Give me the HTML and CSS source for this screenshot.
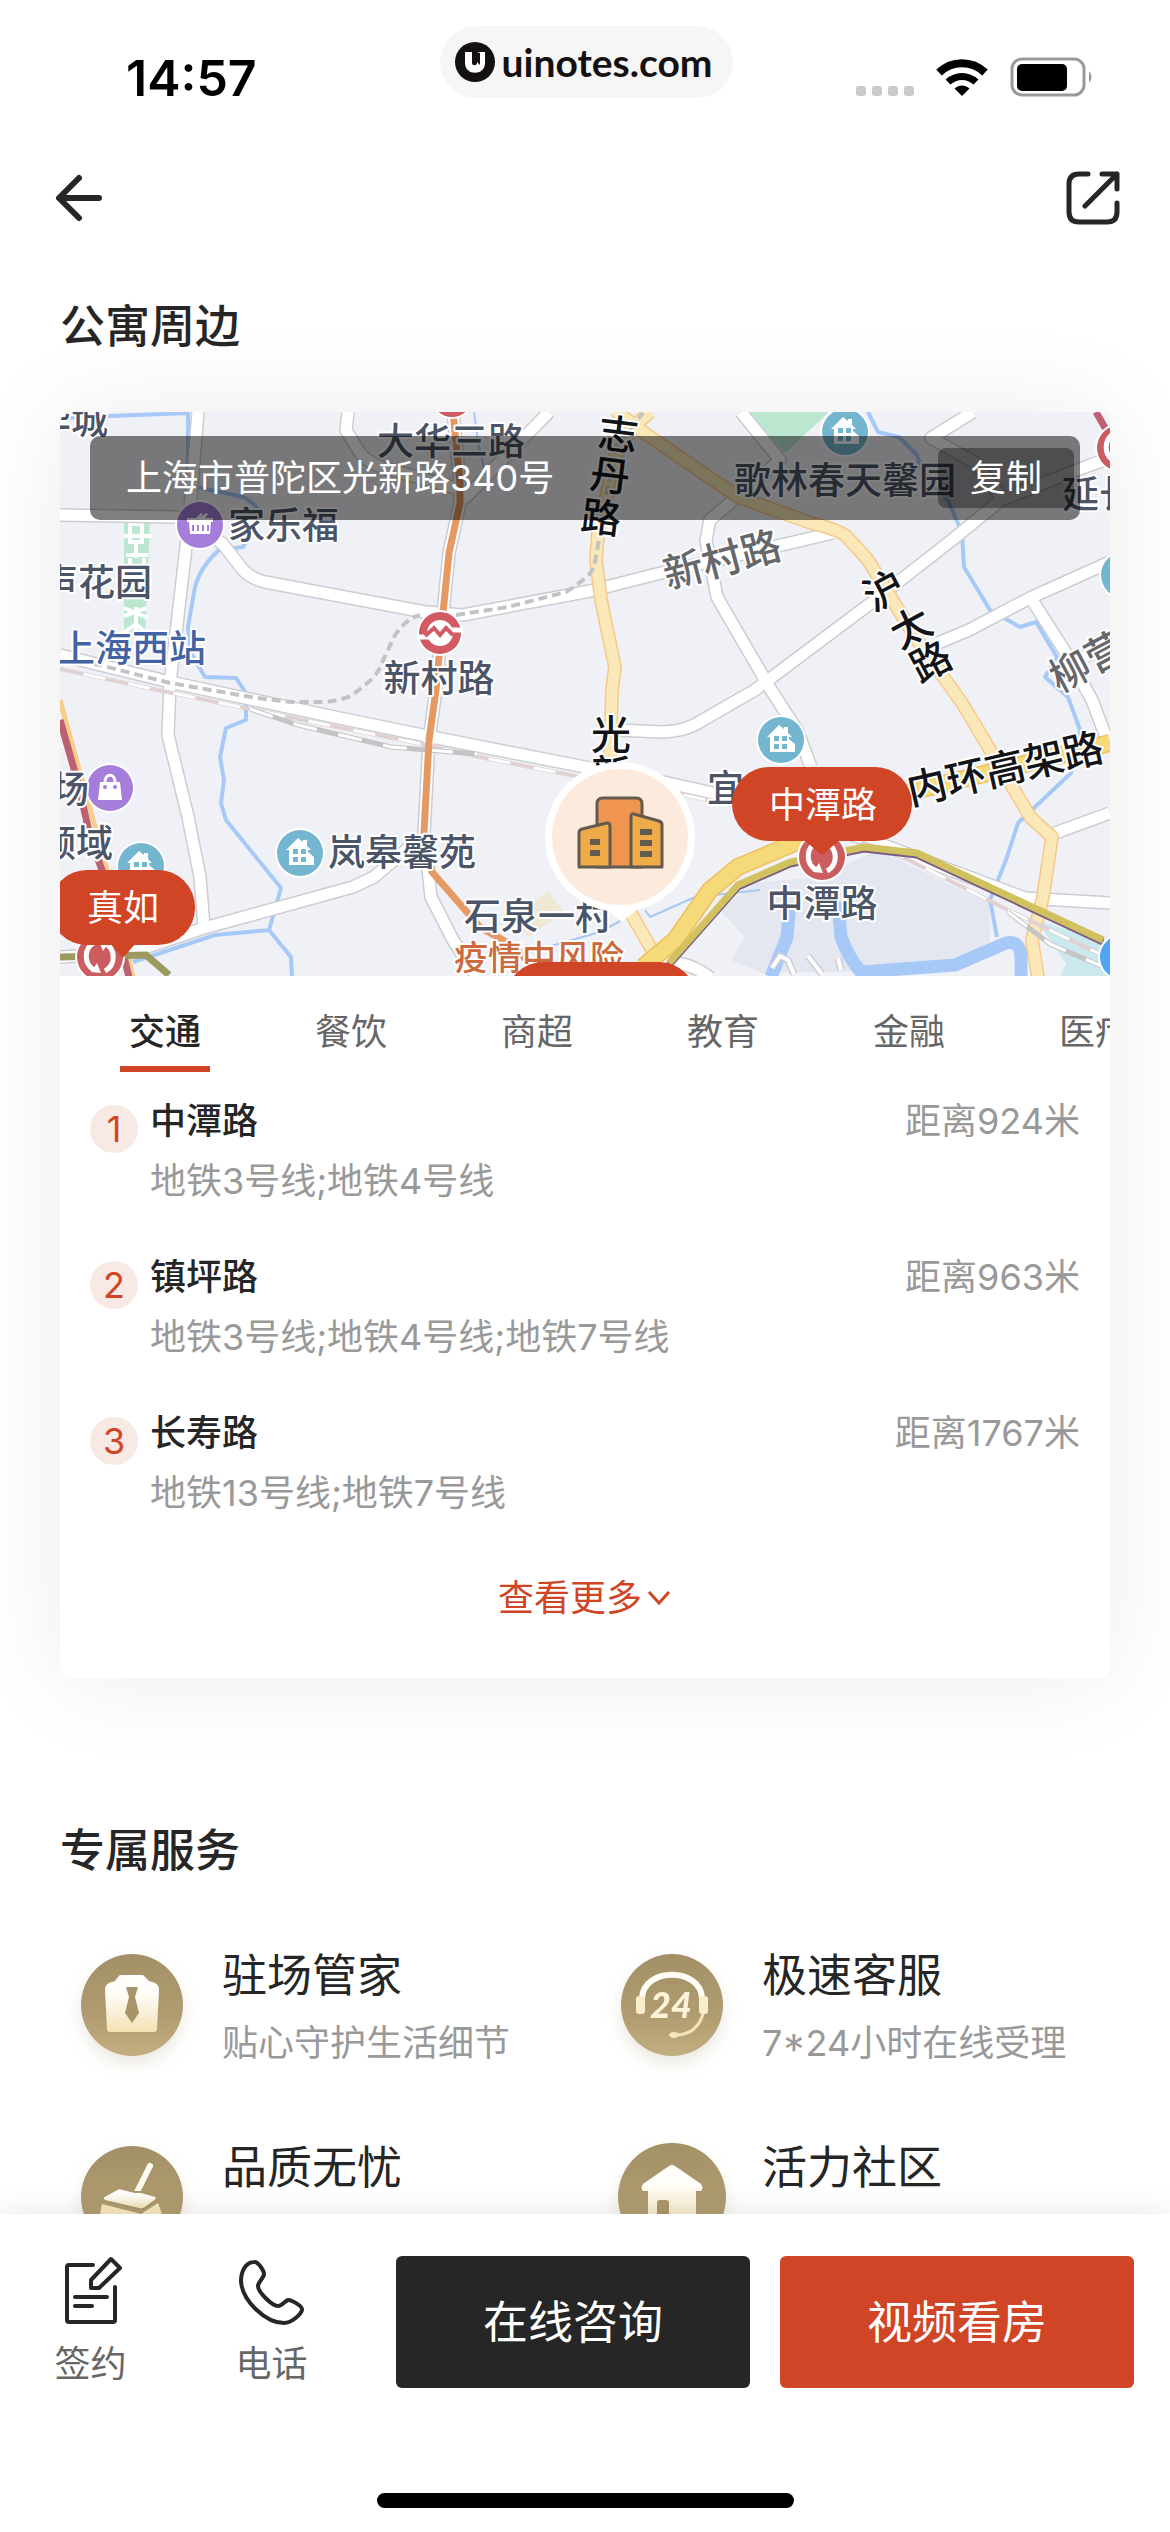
FILE: index.html
```html
<!DOCTYPE html>
<html lang="zh-CN">
<head>
    <meta charset="UTF-8">
    <meta name="viewport" content="width=device-width, initial-scale=1">
    <title>公寓周边</title>
    <link rel="stylesheet" href="styles.css">
</head>
<body>
    <header class="status-bar">
        <span class="time">14:57</span>
        <span class="island">
            <svg width="40" height="40" viewBox="0 0 40 40" aria-hidden="true">
                <circle cx="20" cy="20" r="20" fill="#151112"/>
                <path d="M10 10h7v11c0 3 5 3 5 0V10h8v11c0 13-20 13-20 0z" fill="#fff"/>
                <path d="M17 10h5l3 1v12l-3-3-3 3z" fill="#151112"/>
            </svg>
            uinotes.com
        </span>
        <span class="status-icons">
            <svg width="58" height="40" viewBox="0 0 58 40" fill="#cbcbcb" aria-hidden="true">
                <rect x="0" y="29" width="10" height="10" rx="3"/>
                <rect x="16" y="29" width="10" height="10" rx="3"/>
                <rect x="32" y="29" width="10" height="10" rx="3"/>
                <rect x="48" y="29" width="10" height="10" rx="3"/>
            </svg>
            <svg width="52" height="40" viewBox="0 0 52 40" aria-hidden="true">
                <path d="M3 15.500C16 3 36 3 49 15.500" fill="none" stroke="#000" stroke-width="8"/>
                <path d="M12 25C20 17.500 32 17.500 40 25" fill="none" stroke="#000" stroke-width="7"/>
                <path d="M18.500 31.500C23 27.500 29 27.500 33.500 31.500L26 39z"/>
            </svg>
            <svg width="84" height="40" viewBox="0 0 84 40" aria-hidden="true">
                <rect x="2" y="2" width="72" height="36" rx="10" fill="none" stroke="#999" stroke-width="3"/>
                <rect x="7" y="7" width="50" height="27" rx="5"/>
                <path d="M79 14q5 6 0 12z" fill="#999"/>
            </svg>
        </span>
    </header>

    <nav class="nav-bar">
        <button class="icon-button" aria-label="返回">
            <svg width="52" height="54" viewBox="0 0 52 54" aria-hidden="true">
                <path d="M25 7L5 27l20 20M6 27h39"/>
            </svg>
        </button>
        <button class="icon-button" aria-label="分享">
            <svg width="54" height="54" viewBox="0 0 54 54" aria-hidden="true">
                <path d="M22 3H13Q3 3 3 13V41Q3 51 13 51H41Q51 51 51 41V32M36 3H51V18M51 3L19 35"/>
            </svg>
        </button>
    </nav>

    <main class="content">
        <h1 class="section-title">公寓周边</h1>

        <section class="card">
            <div class="map">
                <svg class="map-canvas" viewBox="0 0 1050 564" preserveAspectRatio="xMidYMid slice">
                    <defs>
                        <g id="home">
                            <circle r="25" fill="#fff"/>
                            <circle r="23" fill="#74b6d0"/>
                            <path d="M-14-3L-2-15 3-11v-2h4v6l4 4H8v2l6 5v8h-25V-3z" fill="#fff"/>
                            <path d="M-7-4h5v5h-5zM1-4h5v5H1zM-7 4h5v5h-5zM1 4h5v5H1z" fill="#74b6d0"/>
                        </g>
                        <g id="metro">
                            <circle r="25" fill="#fff"/>
                            <circle r="23" fill="#cb5c5f"/>
                            <path d="M-5-15A16 16 0 0 0-6 13M5-14A16 16 0 0 1 5 14" fill="none" stroke="#fff" stroke-width="5"/>
                            <path d="M-9 15L1 16-3 6zM9-15L-1-16 3-6z" fill="#fff"/>
                        </g>
                        <g id="metroM">
                            <circle r="23" fill="#fff"/>
                            <circle r="17" fill="#fff" stroke="#d25a62" stroke-width="8"/>
                            <path d="M-23 4h16M7-3h16" stroke="#fff" stroke-width="5"/>
                            <path d="M-15 3L-6-5l6 7 6-7 7 7" fill="none" stroke="#d25a62" stroke-width="4"/>
                        </g>

                        <path id="r1" d="M138 0L131 85 126 135 116 221 110 271 108 323 128 405 140 465 144 515"/>
                        <path id="r2" d="M0 103L117 105 162 131 183 158Q192 167 205 170L365 200 403 203 530 179 601 161 773 121"/>
                        <path id="r3" d="M393 0L400 71V91L389 141 383 201 376 278 369 328 364 421 371 485 393 528 417 565"/>
                        <path id="r4" d="M0 545L69 541 144 516 293 475 314 465 358 428"/>
                        <path id="r5" d="M288 0L286 18 300 41Q308 51 324 56L396 76M489 0L403 88"/>
                        <path id="r6" d="M0 243L110 270 265 303 372 325 530 356 608 371 671 385 818 431 965 486 1050 491"/>
                        <path id="r7" d="M681 0L720 48 650 108 646 128 657 185 711 278 737 318 751 355"/>
                        <path id="r8" d="M913 0L871 26 916 51 941 85M1050 46L1025 55 941 88 892 128 815 188 695 278 643 308Q625 320 601 320L558 318"/>
                        <path id="r9" d="M878 231L909 218 972 185 1050 150M972 188L1004 238 1032 288 1046 325M1004 255L1050 232M995 421L1050 401M592 553Q625 545 650 566"/>
                        <path id="y1" d="M590 0L573 15 555 45 538 121 536 148 541 188 555 255 552 278 550 351M569 498L592 538"/>
                        <path id="y2" d="M555-2L583 20 678 85 751 111Q780 118 787 125L808 148 857 228 902 291 971 406 992 425 983 485 972 528 978 565"/>
                        <path id="g1" d="M583 555L615 528 650 478 678 455 730 433 846 381 1050 331"/>
                    </defs>

                    <rect width="1050" height="564" fill="#f0f1f7"/>

                    <!-- blocks, parks, water -->
                    <path d="M695 471L758 465 818 438 929 491 930 531 871 558 702 561 671 548 685 525 660 498z" fill="#e4e7f0"/>
                    <path d="M976 508L1050 531V565H1000L1006 551z" fill="#cbe8ef"/>
                    <path d="M64 108H90L85 222H64zM688 0H769L725 41z" fill="#bbe6cf"/>
                    <path d="M488 479L504 500 468 525 455 505z" fill="#efe8d4"/>
                    <g fill="none" stroke="#a6c9f7" stroke-width="4" stroke-linejoin="round">
                        <path d="M0 6L128 1V71L141 76 183 85Q203 95 198 108L183 135 159 138Q140 155 135 175L128 215 131 241 145 265 176 266 186 281V308L166 316 160 345 164 368 161 391 166 408 221 476 209 518 231 545 232 565M209 518L155 523 73 550"/>
                        <path d="M808 0L818 20 839 25 857 43 864 65 888 88 902 121 904 155 930 198 960 215 976 210 997 245 985 265 1008 285 1020 318 1011 361 958 411 946 448 930 488 937 525"/>
                        <path d="M414 0L418 30 425 60M470 540L540 520 562 508M585 498L590 505 635 485 700 478" stroke-width="2"/>
                        <path d="M730 490L727 525 711 565M778 490L781 525Q788 545 801 560L895 553 946 531Q960 528 961 545V565" stroke-width="13"/>
                    </g>
                    <path d="M70 112h12v18H70zM64 124h28M76 130v16M66 143h22M70 146v14M84 146v14M76 195v24M64 204l22-8M64 196l24 10M62 222l14-10 14 12" fill="none" stroke="#fff" stroke-width="4"/>
                    <g fill="none" stroke="#ccced4" stroke-width="7">
                        <path d="M712 556l8-12 8 4 6 14M748 544l14 18M778 546l3 12"/>
                        <path d="M712 556l8-12 8 4 6 14M748 544l14 18M778 546l3 12" stroke="#fff" stroke-width="4"/>
                    </g>

                    <!-- roads: casing first, then the fill -->
                    <g fill="none" stroke="#cccdd2" stroke-width="14" stroke-linejoin="round">
                        <use href="#r1"/><use href="#r2"/><use href="#r3"/><use href="#r4"/><use href="#r5"/>
                        <use href="#r6"/><use href="#r7"/><use href="#r8"/><use href="#r9"/>
                    </g>
                    <g fill="none" stroke="#fff" stroke-width="11" stroke-linejoin="round">
                        <use href="#r1"/><use href="#r2"/><use href="#r3"/><use href="#r4"/><use href="#r5"/>
                        <use href="#r6"/><use href="#r7"/><use href="#r8"/><use href="#r9"/>
                    </g>
                    <g fill="none" stroke-linejoin="round">
                        <g stroke="#f5c98a" stroke-width="14"><use href="#y1"/><use href="#y2"/></g>
                        <g stroke="#fbe8b8" stroke-width="11"><use href="#y1"/><use href="#y2"/></g>
                        <use href="#g1" stroke="#eec062" stroke-width="18"/>
                        <use href="#g1" stroke="#f6d978" stroke-width="15"/>
                    </g>

                    <!-- railways and metro lines -->
                    <g fill="none">
                        <path d="M0 257L93 277 190 297 238 307 352 330 420 345 520 365M600 378L671 393M801 430L843 445 948 498 1046 545" stroke="#cfc8cb" stroke-width="4"/>
                        <path d="M0 257L93 277 190 297 238 307 352 330 420 345 520 365M600 378L671 393M801 430L843 445 948 498 1046 545" stroke="#fff" stroke-width="3"/>
                        <path d="M0 257L93 277 190 297 238 307 352 330 420 345 520 365M600 378L671 393M801 430L843 445 948 498 1046 545" stroke="#e2cfcf" stroke-width="3" stroke-dasharray="24 22"/>
                        <path d="M190 297L238 313 331 335 417 342M948 500L990 532 1046 556" stroke="#c4c4c4" stroke-width="5"/>
                        <path d="M190 297L238 313 331 335 417 342M948 500L990 532 1046 556" stroke="#fff" stroke-width="3" stroke-dasharray="24 22"/>
                        <path d="M20 248L110 271 197 286 231 290 265 290Q290 287 296 280 317 265 320 255L334 225Q345 207 360 203M396 203L448 195 506 180Q530 165 534 155L539 128 550 65 559 31 583 1" stroke="#c3c3c3" stroke-width="4" stroke-dasharray="9 5"/>
                        <path d="M393 0L400 71V91L389 141 383 201 376 278 369 328 364 421 372 460 420 515 455 535 472 555" stroke="#e49a62" stroke-width="7"/>
                        <path d="M0 288L24 375 47 458 73 565" stroke="#f6cd8a" stroke-width="5"/>
                        <path d="M0 308L18 371 31 428 42 458 69 565M1036 0L1044 14 1054 30" stroke="#bb6172" stroke-width="7"/>
                        <path d="M0 545L86 543 109 563" stroke="#9c9a60" stroke-width="7"/>
                        <path d="M609 553L678 475 730 452 804 437 857 443 1043 530" stroke="#7a5d86" stroke-width="7"/>
                        <path d="M609 551L678 473 730 450 804 435 857 441 1043 528" stroke="#d2c15f" stroke-width="7"/>
                    </g>

                    <!-- points of interest -->
                    <g transform="translate(140 113)">
                        <circle r="25" fill="#fff"/><circle r="23" fill="#a57ddb"/>
                        <path d="M-13-7h9l5-5 2 1-3 4 6-5 2 1-3 4h8v4h-2l-1 12h-20l-1-12h-2z" fill="#fff"/>
                        <path d="M-7 0v6M-2 0v6M3 0v6M8 0v6" stroke="#a57ddb" stroke-width="2"/>
                    </g>
                    <g transform="translate(50 376)">
                        <circle r="25" fill="#fff"/><circle r="23" fill="#a57ddb"/>
                        <path d="M-10-6h20l2 18h-24z" fill="#fff"/>
                        <path d="M-5-6c0-9 10-9 10 0" fill="none" stroke="#fff" stroke-width="3"/>
                        <circle cx="-5" cy="-1" r="2" fill="#a57ddb"/><circle cx="5" cy="-1" r="2" fill="#a57ddb"/>
                    </g>
                    <use href="#home" x="81" y="454"/>
                    <use href="#home" x="240" y="441"/>
                    <use href="#home" x="785" y="20"/>
                    <use href="#home" x="721" y="328"/>
                    <use href="#home" x="1064" y="163"/>
                    <use href="#metroM" x="380" y="221"/>
                    <use href="#metroM" x="392" y="-16"/>
                    <use href="#metro" x="1060" y="36"/>
                    <use href="#metro" x="762" y="445"/>
                    <use href="#metro" x="40" y="545"/>
                    <circle cx="1062" cy="545" r="23" fill="#4fa6f6" stroke="#fff" stroke-width="2"/>

                    <g class="place">
                        <text x="48" y="22" text-anchor="end">华城</text>
                        <text x="391" y="43" text-anchor="middle">大华三路</text>
                        <text x="168" y="127">家乐福</text>
                        <text x="92" y="184" text-anchor="end">声花园</text>
                        <text class="station" x="-2" y="250">上海西站</text>
                        <text x="379" y="280" text-anchor="middle">新村路</text>
                        <text x="674" y="82">歌林春天馨园</text>
                        <text x="1002" y="96">延长</text>
                        <text x="29" y="391" text-anchor="end">广场</text>
                        <text x="53" y="445" text-anchor="end">领域</text>
                        <text x="268" y="454">岚皋馨苑</text>
                        <text x="404" y="518">石泉一村</text>
                        <text x="647" y="390">宜川</text>
                        <text x="762" y="505" text-anchor="middle">中潭路</text>
                        <text class="warning" x="394" y="558">疫情中风险</text>
                    </g>
                    <g class="place road-name">
                        <text transform="translate(558 23) rotate(7)" y="14">志</text>
                        <text transform="translate(550 64) rotate(7)" y="14">丹</text>
                        <text transform="translate(541 106) rotate(7)" y="14">路</text>
                        <text transform="translate(824 179) rotate(-28)" y="14">沪</text>
                        <text transform="translate(851 216) rotate(-28)" y="14">太</text>
                        <text transform="translate(871 250) rotate(-28)" y="14">路</text>
                        <text transform="translate(551 323)" y="14">光</text>
                        <text transform="translate(551 363)" y="14">新</text>
                        <text transform="translate(945 357) rotate(-13)" y="14">内环高架路</text>
                    </g>
                    <g class="place road-name minor">
                        <text transform="translate(662 148) rotate(-15)" y="14">新村路</text>
                        <text transform="translate(1028 250) rotate(-28)" y="14">柳营</text>
                    </g>

                    <!-- pins -->
                    <g fill="#cf4526">
                        <path d="M51 532h24L63 546z"/><rect x="-10" y="458" width="145" height="75" rx="37"/>
                        <path d="M744 428h36L762 443z"/><rect x="672" y="355" width="180" height="74" rx="37"/>
                        <rect x="446" y="550" width="190" height="74" rx="37"/>
                    </g>
                    <text class="pin-label" x="63" y="509">真如</text>
                    <text class="pin-label" x="763" y="406">中潭路</text>

                    <path d="M530 485L562 510 592 485z" fill="#fff"/>
                    <circle cx="560" cy="425" r="75" fill="#fff"/>
                    <circle cx="560" cy="425" r="68" fill="#fcebdc"/>
                    <g stroke="#635b4f" stroke-width="3" stroke-linejoin="round">
                        <path d="M537 455V392q0-6 6-6h33q6 0 6 6v63z" fill="#f09550"/>
                        <path d="M519 455V421q0-3 3-4l25-6q3 0 3 3v41z" fill="#eeab48"/>
                        <path d="M571 455V405q0-4 3-3l25 7q3 1 3 4v42z" fill="#eeab48"/>
                    </g>
                    <path d="M530 427h10v6h-10zM530 438h10v6h-10zM580 417h12v6h-12zM580 428h12v6h-12zM580 439h12v6h-12z" fill="#635b4f"/>
                </svg>

                <div class="address">
                    <span>上海市普陀区光新路340号</span>
                    <button class="copy">复制</button>
                </div>
            </div>

            <div class="tabs" role="tablist">
                <button class="tab active" role="tab" aria-selected="true">交通</button>
                <button class="tab" role="tab">餐饮</button>
                <button class="tab" role="tab">商超</button>
                <button class="tab" role="tab">教育</button>
                <button class="tab" role="tab">金融</button>
                <button class="tab" role="tab">医疗</button>
            </div>

            <ol class="stations">
                <li>
                    <span class="badge">1</span>
                    <div class="station-info">
                        <h2>中潭路</h2>
                        <p>地铁3号线;地铁4号线</p>
                    </div>
                    <span class="distance">距离924米</span>
                </li>
                <li>
                    <span class="badge">2</span>
                    <div class="station-info">
                        <h2>镇坪路</h2>
                        <p>地铁3号线;地铁4号线;地铁7号线</p>
                    </div>
                    <span class="distance">距离963米</span>
                </li>
                <li>
                    <span class="badge">3</span>
                    <div class="station-info">
                        <h2>长寿路</h2>
                        <p>地铁13号线;地铁7号线</p>
                    </div>
                    <span class="distance">距离1767米</span>
                </li>
            </ol>

            <button class="more">
                查看更多
                <svg width="26" height="18" viewBox="0 0 26 18" aria-hidden="true">
                    <path d="M3 3l10 11L23 3"/>
                </svg>
            </button>
        </section>

        <h1 class="section-title services-title">专属服务</h1>

        <svg width="0" height="0" class="defs" aria-hidden="true">
            <defs>
                <linearGradient id="disc" x1="0" y1="0" x2="0" y2="1">
                    <stop offset="0" stop-color="#a39066"/>
                    <stop offset="0.600" stop-color="#b09c70"/>
                    <stop offset="1" stop-color="#c2ae80"/>
                </linearGradient>
                <linearGradient id="cream" x1="0" y1="0" x2="0" y2="1">
                    <stop offset="0.300" stop-color="#fffefa"/>
                    <stop offset="1" stop-color="#f3e2b5"/>
                </linearGradient>
            </defs>
        </svg>

        <section class="services">
            <article class="service">
                <svg class="service-icon" viewBox="0 0 102 102" aria-hidden="true">
                    <circle cx="51" cy="51" r="51" fill="url(#disc)"/>
                    <path d="M40 21H61Q63 21 64 23L68 27 74 29Q78 31 78 36L76 75Q76 78 73 78H29Q26 78 26 75L24 36Q24 31 28 29L34 27 37 23Q38 21 40 21z" fill="url(#cream)"/>
                    <path d="M45 33H57L54 43 58 59 51 69 44 59 48 43z" fill="#a8946a"/>
                </svg>
                <div>
                    <h2>驻场管家</h2>
                    <p>贴心守护生活细节</p>
                </div>
            </article>
            <article class="service">
                <svg class="service-icon" viewBox="0 0 102 102" aria-hidden="true">
                    <circle cx="51" cy="51" r="51" fill="url(#disc)"/>
                    <path d="M21 44C23 13 79 13 81 44" fill="none" stroke="#fffdf5" stroke-width="6"/>
                    <rect x="15" y="42" width="9" height="18" rx="3" fill="#faedcb"/>
                    <rect x="78" y="42" width="9" height="18" rx="3" fill="#faedcb"/>
                    <path d="M82 60Q76 80 56 81" fill="none" stroke="#f3e3b9" stroke-width="3"/>
                    <ellipse cx="53" cy="81" rx="5" ry="3" fill="#f7e8c2"/>
                    <text class="icon-number" x="50" y="64">24</text>
                </svg>
                <div>
                    <h2>极速客服</h2>
                    <p>7*24小时在线受理</p>
                </div>
            </article>
            <article class="service">
                <svg class="service-icon" viewBox="0 0 102 102" aria-hidden="true">
                    <circle cx="51" cy="51" r="51" fill="url(#disc)"/>
                    <path d="M69 20L55 48" stroke="#fffcf2" stroke-width="6" stroke-linecap="round"/>
                    <path d="M21 58L60 68 77 57 81 68 76 90H24L19 68z" fill="#f6e7c0"/>
                    <path d="M38 42L54 46H60L75 50Q77 52 75 54L64 62Q61 64 58 63L24 55Q20 53 23 50z" fill="url(#cream)" stroke="#ab976c" stroke-width="2"/>
                </svg>
                <div>
                    <h2>品质无忧</h2>
                </div>
            </article>
            <article class="service">
                <svg class="service-icon" viewBox="0 0 102 102" aria-hidden="true">
                    <circle cx="51" cy="51" r="54" fill="url(#disc)"/>
                    <path d="M48 20Q51 18 54 20L80 38Q83 42 80 45H75V82H27V45H22Q19 42 22 38z" fill="url(#cream)"/>
                    <path d="M36 84V57q0-3 3-3h6q3 0 3 3v27z" fill="#ab976c"/>
                </svg>
                <div>
                    <h2>活力社区</h2>
                </div>
            </article>
        </section>
    </main>

    <footer class="bottom-bar">
        <div class="actions">
            <button class="shortcut">
                <svg width="72" height="72" viewBox="0 2 72 72" aria-hidden="true">
                    <path d="M38 11H14Q12 11 12 13V66Q12 68 14 68H58Q60 68 60 66V33M20 43H52M20 52H37M56 5L65 14 44 34H36V26z"/>
                </svg>
                签约
            </button>
            <button class="shortcut">
                <svg width="72" height="72" viewBox="0 2 72 72" aria-hidden="true">
                    <path d="M18 8C10 8 5 17 5 27C6 47 30 69 48 69C56 69 65 60 66 56C67 52 54 45 52 46C49 47 46 52 42 52C36 52 22 38 22 32C22 28 28 24 28 20C28 17 22 7 18 8z"/>
                </svg>
                电话
            </button>
            <button class="cta dark">在线咨询</button>
            <button class="cta red">视频看房</button>
        </div>
        <div class="home-indicator"></div>
    </footer>
</body>
</html>
```

FILE: styles.css
```css
* {
    box-sizing: border-box;
}

body {
    margin: 0;
    height: 100vh;
    display: flex;
    flex-direction: column;
    background: #fff;
    color: #262626;
    font-family: Inter, "Noto Sans CJK SC", sans-serif;
    font-size: 36px;
    line-height: 48px;
}

h1, h2, p, ol {
    margin: 0;
    padding: 0;
    font-size: 36px;
}

button {
    border: none;
    padding: 0;
    background: none;
    color: inherit;
    font: inherit;
    cursor: pointer;
}

/* status bar */
.status-bar {
    display: grid;
    grid-template-columns: 1fr auto 1fr;
    align-items: start;
    padding: 26px 76px 0 126px;
    height: 150px;
    flex: none;
}

.time {
    margin-top: 22px;
    font-size: 50px;
    font-weight: 600;
    line-height: 60px;
    color: #000;
}

.island {
    display: flex;
    align-items: center;
    gap: 6px;
    height: 72px;
    padding: 0 20px 0 15px;
    margin-right: 47px;
    border-radius: 36px;
    background: #f6f6f6;
    color: #151112;
    font-family: Lato, sans-serif;
    font-size: 39px;
    font-weight: 700;
}

.status-icons {
    display: flex;
    justify-content: flex-end;
    gap: 22px;
    margin-top: 31px;
}

.nav-bar {
    display: flex;
    justify-content: space-between;
    align-items: center;
    height: 96px;
    padding: 0 50px 0 54px;
    flex: none;
}

.icon-button {
    display: flex;
}

.icon-button svg {
    fill: none;
    stroke: #262626;
    stroke-width: 5;
    stroke-linecap: round;
    stroke-linejoin: round;
}

.icon-button:first-child svg {
    stroke-width: 6;
}

.content {
    flex: 1;
    min-height: 0;
    overflow: hidden auto;
    scrollbar-width: none;
    padding: 49px 60px 0;
}

.section-title {
    margin-bottom: 53px;
    font-size: 45px;
    font-weight: 500;
    line-height: 64px;
}

/* map card */
.card {
    border-radius: 12px;
    background: #fff;
    box-shadow: 0 0 100px rgba(0, 0, 0, 0.08);
    overflow: hidden;
    padding-bottom: 56px;
}

.map {
    position: relative;
    height: 564px;
}

.map-canvas {
    display: block;
    width: 100%;
    height: 100%;
}

.place {
    font-size: 37px;
    font-weight: 500;
    fill: #4c5467;
    stroke: #fff;
    stroke-width: 4px;
    stroke-linejoin: round;
    paint-order: stroke;
}

.place .station {
    fill: #4463a4;
}

.place .warning {
    font-size: 34px;
    fill: #cb6a3c;
}

.road-name {
    font-size: 40px;
    fill: #121417;
    text-anchor: middle;
}

.minor {
    fill: #66676b;
}

.pin-label {
    font-size: 36px;
    fill: #fff;
    text-anchor: middle;
}

.address {
    position: absolute;
    top: 24px;
    left: 30px;
    right: 30px;
    display: flex;
    justify-content: space-between;
    align-items: center;
    height: 84px;
    padding: 0 6px 0 36px;
    border-radius: 10px;
    background: rgba(0, 0, 0, 0.5);
    color: #fff;
}

.copy {
    width: 136px;
    height: 60px;
    border-radius: 8px;
    background: rgba(0, 0, 0, 0.35);
}

.tabs {
    display: flex;
    overflow: hidden;
    padding-left: 12px;
}

.tab {
    position: relative;
    flex: 0 0 186px;
    padding: 32px 0 16px;
    color: #666;
}

.tab.active {
    color: #262626;
    font-weight: 500;
}

.tab.active::after {
    content: "";
    position: absolute;
    left: 48px;
    right: 48px;
    bottom: 0;
    height: 6px;
    background: #cf4526;
}

.stations {
    display: flex;
    flex-direction: column;
    gap: 48px;
    padding: 25px 30px 57px;
    list-style: none;
}

.stations li {
    display: flex;
    align-items: flex-start;
    gap: 12px;
}

.badge {
    width: 48px;
    height: 48px;
    margin-top: 8px;
    border-radius: 50%;
    background: #f9e9e5;
    color: #cf4526;
    text-align: center;
}

.station-info {
    flex: 1;
}

.station-info h2 {
    font-weight: 500;
}

.station-info p {
    margin-top: 12px;
    color: #999;
}

.distance {
    color: #999;
}

.more {
    display: flex;
    align-items: center;
    gap: 4px;
    margin: 0 auto;
    color: #cf4526;
}

.more svg {
    fill: none;
    stroke: #cf4526;
    stroke-width: 3;
}

/* services */
.services-title {
    margin-top: 141px;
    margin-bottom: 63px;
}

.defs {
    position: absolute;
}

.services {
    display: grid;
    grid-template-columns: 540px 1fr;
    row-gap: 71px;
}

.service {
    display: flex;
    align-items: flex-start;
    gap: 39px;
    padding-left: 21px;
    white-space: nowrap;
}

.service-icon {
    width: 102px;
    height: 102px;
    margin-top: 8px;
    overflow: visible;
    filter: drop-shadow(0 8px 8px rgba(120, 100, 50, 0.15));
}

.icon-number {
    font-family: Lato, sans-serif;
    font-size: 36px;
    font-weight: 900;
    font-style: italic;
    text-anchor: middle;
    fill: #fdf3d9;
}

.service h2 {
    font-size: 45px;
    font-weight: 400;
    line-height: 60px;
}

.service p {
    margin-top: 13px;
    color: #999;
}

/* bottom bar */
.bottom-bar {
    position: relative;
    flex: none;
    padding-top: 42px;
    background: #fff;
    box-shadow: 0 0 30px rgba(0, 0, 0, 0.1);
}

.actions {
    display: flex;
    padding-right: 36px;
}

.shortcut {
    display: flex;
    flex-direction: column;
    align-items: center;
    gap: 12px;
    width: 181px;
    color: #666;
}

.shortcut svg {
    fill: none;
    stroke: #262626;
    stroke-width: 4;
    stroke-linecap: round;
    stroke-linejoin: round;
}

.cta {
    flex: 1;
    height: 132px;
    padding-top: 2px;
    border-radius: 6px;
    color: #fff;
    font-size: 45px;
}

.dark {
    margin: 0 30px 0 34px;
    background: #262626;
}

.red {
    background: #cf4526;
}

.home-indicator {
    width: 417px;
    height: 15px;
    margin: 105px auto 24px;
    border-radius: 8px;
    background: #000;
}
```
